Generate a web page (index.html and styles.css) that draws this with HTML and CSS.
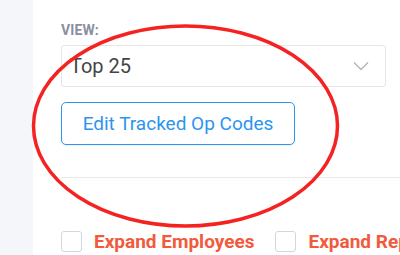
FILE: index.html
```html
<!DOCTYPE html>
<html>
<head>
<meta charset="utf-8">
<link rel="stylesheet" href="styles.css">
</head>
<body>
<div class="page">
  <aside class="sidebar"></aside>
  <main class="main">
    <div class="field">
      <div class="label">VIEW:</div>
      <div class="select">
        <span class="select-value">Top 25</span>
        <svg class="chevron" width="16" height="10" viewBox="0 0 16 10"><path d="M1 1.5 L8 8.5 L15 1.5" fill="none" stroke="#b4b4b4" stroke-width="1.3"/></svg>
      </div>
      <button class="btn">Edit Tracked Op Codes</button>
    </div>
    <hr class="divider">
    <div class="options">
      <label class="check"><span class="box"></span><span class="check-text">Expand Employees</span></label>
      <label class="check"><span class="box"></span><span class="check-text">Expand Repair Orders</span></label>
    </div>
  </main>
  <svg class="annotation" width="400" height="255" viewBox="0 0 400 255">
    <ellipse cx="185.5" cy="126" rx="152" ry="100" fill="none" stroke="#f52222" stroke-width="3.5"/>
  </svg>
</div>
</body>
</html>
```
FILE: styles.css
```css
html, body {
  margin: 0;
  padding: 0;
  background: #ffffff;
  font-family: Roboto, "Liberation Sans", Arial, sans-serif;
  overflow: hidden;
}
.page {
  position: relative;
  display: flex;
  width: 400px;
  height: 255px;
  overflow: hidden;
}
.sidebar {
  width: 33px;
  flex: none;
  background: #f5f6fa;
}
.main {
  flex: 1;
  padding-top: 23px;
  min-width: 0;
}
.field {
  padding-left: 28px;
  padding-right: 14px;
}
.label {
  font-size: 14px;
  font-weight: 700;
  color: #8b8ea3;
  letter-spacing: 0.1px;
  line-height: 15px;
  margin-bottom: 7px;
}
.select {
  height: 40px;
  border: 1px solid #e6e6e9;
  border-radius: 3px;
  display: flex;
  align-items: center;
  justify-content: space-between;
  padding: 0 16px 0 8px;
}
.select-value {
  font-size: 20px;
  color: #444444;
}
.chevron {
  display: block;
}
.btn {
  margin-top: 15px;
  width: 234px;
  height: 43px;
  border: 1.5px solid #2b95f0;
  border-radius: 5px;
  background: #ffffff;
  color: #2b95f0;
  font-family: Roboto, "Liberation Sans", Arial, sans-serif;
  font-size: 19px;
  padding: 0;
  box-shadow: 0 1px 2px rgba(0,0,0,0.06);
}
.divider {
  margin: 32px 0 0 28px;
  border: 0;
  border-top: 1px solid #e9e9ec;
  height: 0;
}
.options {
  display: flex;
  gap: 21px;
  padding-left: 28px;
  margin-top: 52px;
  white-space: nowrap;
}
.check {
  display: flex;
  align-items: center;
  gap: 12px;
}
.box {
  width: 19px;
  height: 19px;
  border: 1px solid #d6d6da;
  border-radius: 3px;
  flex: none;
}
.check-text {
  font-size: 19px;
  font-weight: 700;
  color: #f25a3e;
}
.annotation {
  position: absolute;
  left: 0;
  top: 0;
  pointer-events: none;
}
```
